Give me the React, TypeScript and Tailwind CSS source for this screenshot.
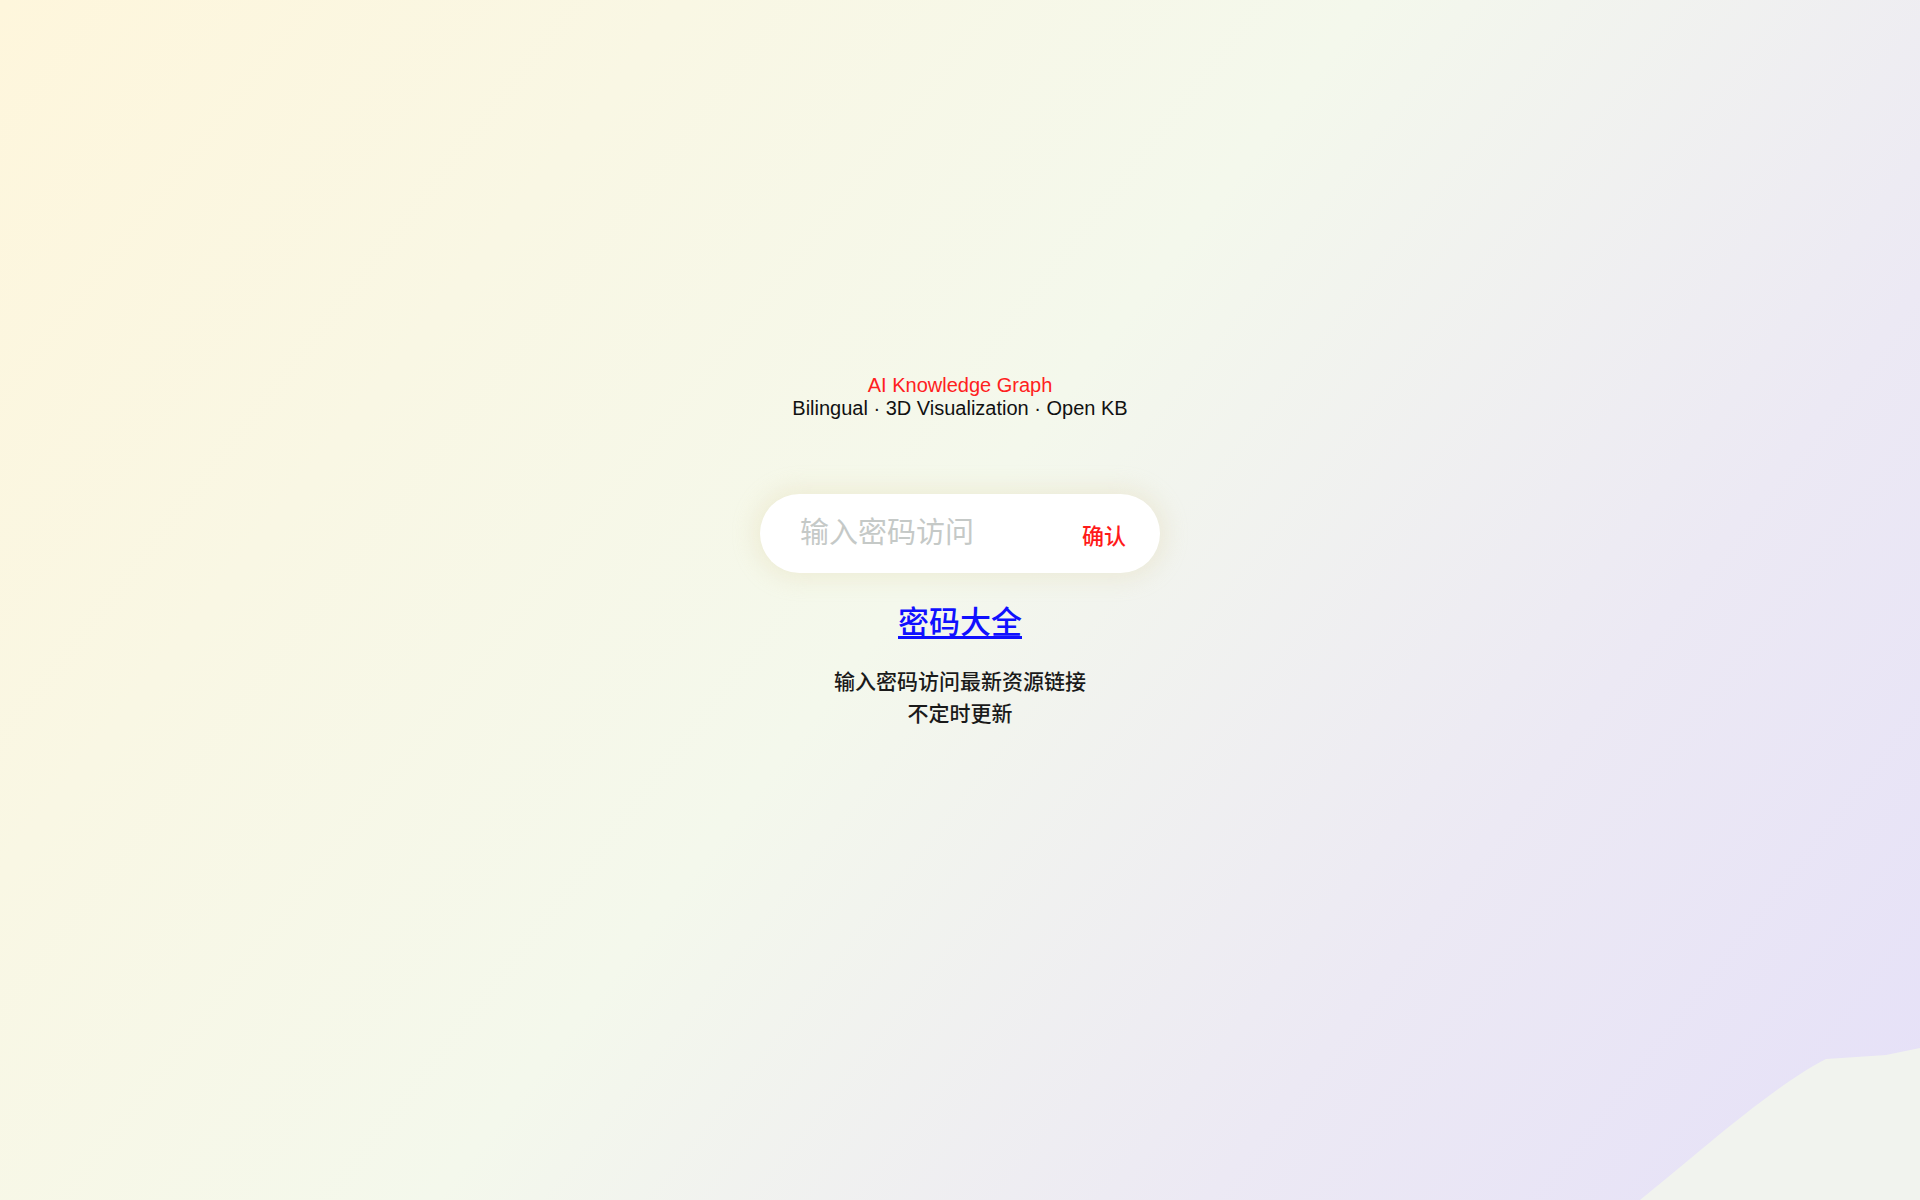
import React, { useState } from "react";

export default function App() {
  const [password, setPassword] = useState("");

  return (
    <div
      className="relative min-h-screen w-full overflow-hidden bg-[linear-gradient(128deg,#fef6dc_0%,#f4f8ec_48%,#ece9f4_75%,#e5e0f8_100%)]"
      style={{ fontFamily: '"Liberation Sans", Arial, "Noto Sans CJK SC", sans-serif' }}
    >
      {/* Decorative blob, bottom right */}
      <svg
        className="absolute bottom-0 right-0 h-[152px] w-[280px]"
        viewBox="0 0 280 152"
        preserveAspectRatio="none"
      >
        <path d="M0 152 C60 104 130 40 186 11 L246 7 L280 0 L280 152 Z" fill="#f1f3ee" />
      </svg>

      <div className="relative flex flex-col items-center pt-[374px]">
        {/* Title */}
        <div className="flex flex-col items-center text-[20px] leading-[23px]">
          <p className="text-[#ff2020]">AI Knowledge Graph</p>
          <p className="text-[#111]">Bilingual · 3D Visualization · Open KB</p>
        </div>

        {/* Password input */}
        <div className="mt-[74px] flex h-[79px] w-[400px] items-center rounded-full bg-white pl-[40px] pr-[34px] shadow-[0_0_22px_6px_rgba(222,210,160,0.28)]">
          <input
            type="password"
            value={password}
            onChange={(e) => setPassword(e.target.value)}
            placeholder="输入密码访问"
            className="mb-[6px] min-w-0 flex-1 bg-transparent text-[29px] text-[#333] outline-none placeholder:text-[#c5c9c7]"
            style={{ fontFamily: '"Noto Sans CJK SC", sans-serif' }}
          />
          <button
            className="mt-[2px] cursor-pointer text-[22px] font-medium text-[#ff1a1a]"
            style={{ fontFamily: '"Noto Sans CJK SC", sans-serif' }}
          >
            确认
          </button>
        </div>

        {/* Link */}
        <a
          href="#"
          className="mt-[27px] text-[31px] leading-[40px] font-medium text-[#1010ff] underline underline-offset-[3px]"
          style={{ fontFamily: '"Noto Sans CJK SC", sans-serif' }}
        >
          密码大全
        </a>

        {/* Description */}
        <div
          className="mt-[24px] flex flex-col items-center text-[21px] leading-[32px] font-medium text-[#1a1a1a]"
          style={{ fontFamily: '"Noto Sans CJK SC", sans-serif' }}
        >
          <p>输入密码访问最新资源链接</p>
          <p>不定时更新</p>
        </div>
      </div>
    </div>
  );
}
